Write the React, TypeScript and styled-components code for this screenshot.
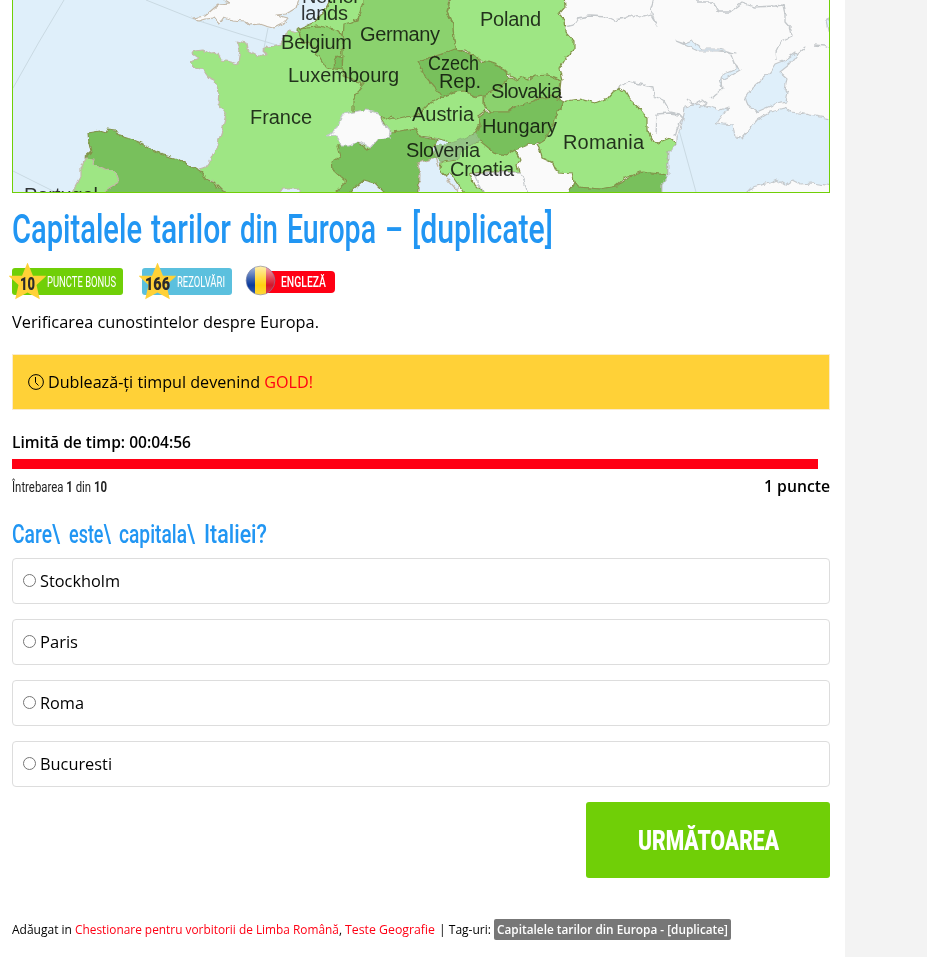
import React, { useLayoutEffect, useRef, useState } from "react";
import styled, { createGlobalStyle } from "styled-components";

const GlobalStyle = createGlobalStyle`
  * { box-sizing: border-box; }
  body { margin: 0; background: #f3f3f3; font-family: "Open Sans", "Noto Sans", sans-serif; color: #000; }
`;

const Page = styled.main`
  width: 845px;
  height: 957px;
  padding: 0 15px 0 12px;
  background: #fff;
  overflow: hidden;
`;

const MapFrame = styled.div`
  height: 193px;
  border: 1px solid #70cf07;
  border-top: 0;
  overflow: hidden;
  svg { display: block; }
  text { font-family: "Liberation Sans", Arial, sans-serif; font-size: 20px; fill: #000; opacity: 0.78; }
`;

const FitBox = styled.span<{ $w: number }>`
  display: inline-block;
  width: ${(p) => p.$w}px;
  white-space: nowrap;
`;
const FitInner = styled.span`
  display: inline-block;
  transform-origin: 0 50%;
`;

/* Text stretched or condensed to an exact line width. */
function Fit({ w, children }: { w: number; children: React.ReactNode }) {
  const ref = useRef<HTMLSpanElement>(null);
  const [scale, setScale] = useState(1);
  useLayoutEffect(() => {
    if (ref.current) {
      const natural = ref.current.getBoundingClientRect().width / scale;
      setScale(w / natural);
    }
  }, [w]);
  return (
    <FitBox $w={w}>
      <FitInner ref={ref} style={{ transform: `scaleX(${scale})` }}>{children}</FitInner>
    </FitBox>
  );
}

const Title = styled.h1`
  display: flex;
  gap: 9px;
  margin: 0;
  height: 70px;
  font: 500 40px/74px Roboto, sans-serif;
  color: #2196f3;
`;

const Badges = styled.div`
  display: flex;
  align-items: center;
  height: 37px;
`;
const Badge = styled.div<{ $w: number; $color: string }>`
  position: relative;
  width: ${(p) => p.$w}px;
  height: 27px;
  margin-right: 19px;
  padding-left: 35px;
  border-radius: 3px;
  background: ${(p) => p.$color};
  color: #fff;
  font: 400 14px/28px Roboto, sans-serif;
`;
const Star = styled.div`
  position: absolute;
  left: -3px;
  top: -5px;
  width: 37px;
  height: 37px;
  text-align: center;
  color: #2b2b2b;
  font: 900 18px/41px Roboto, sans-serif;
  svg { position: absolute; left: 0; top: 0; }
  > span { position: relative; }
`;
const Language = styled.div`
  position: relative;
  width: 75px;
  height: 22px;
  margin-left: 9px;
  padding-left: 21px;
  border-radius: 4px;
  background: #ff0014;
  color: #fff;
  font: 500 14px/22px Roboto, sans-serif;
  svg { position: absolute; left: -15px; top: -6px; }
`;

const Description = styled.p`
  margin: 0;
  height: 54px;
  font-size: 16px;
  line-height: 44px;
`;
const Notice = styled.div`
  display: flex;
  align-items: center;
  height: 56px;
  padding: 0 15px;
  border: 1px solid #faebcc;
  background: #ffd137;
  font-size: 16px;
  svg { margin-right: 4px; }
`;
const Red = styled.a`color: #ff0014;`;
const Timer = styled.div`
  height: 49px;
  padding-top: 20px;
  font-size: 16px;
  line-height: 24px;
  font-weight: 600;
`;
const Progress = styled.div`
  width: 806px;
  height: 10px;
  background: #ff0014;
`;
const Status = styled.div`
  display: flex;
  justify-content: space-between;
  height: 46px;
  line-height: 34px;
  font-size: 16px;
  font-weight: 600;
`;
const Counter = styled.div`
  color: #222;
  font: 400 14px/36px Roboto, sans-serif;
  b { font-weight: 700; }
`;
const Question = styled.h2`
  display: flex;
  gap: 8.5px;
  margin: 0;
  height: 43px;
  font: 500 25px/40px Roboto, sans-serif;
  color: #2196f3;
`;
const Options = styled.div`
  display: flex;
  flex-direction: column;
  gap: 15px;
`;
const Option = styled.label`
  display: flex;
  align-items: center;
  height: 46px;
  padding: 0 10px;
  border: 1px solid #ddd;
  border-radius: 4px;
  font-size: 16px;
`;
const Radio = styled.input`
  appearance: none;
  width: 13px;
  height: 13px;
  margin: 0 4px 2px 0;
  border: 1px solid #767676;
  border-radius: 50%;
  background: #fff;
`;
const Actions = styled.div`
  display: flex;
  justify-content: flex-end;
  margin-top: 15px;
`;
const NextButton = styled.button`
  width: 244px;
  height: 76px;
  padding: 2px 0 0;
  border: 0;
  border-radius: 3px;
  background: #70cf07;
  color: #fff;
  font: 900 28px/74px Roboto, sans-serif;
`;
const Footer = styled.footer`
  display: flex;
  align-items: center;
  height: 21px;
  margin-top: 41px;
  font-size: 12px;
  line-height: 21px;
`;
const Meta = styled.span<{ $gap?: number }>`
  margin-right: ${(p) => p.$gap ?? 3}px;
`;
const Tag = styled.span`
  height: 21px;
  padding: 0 3px;
  border-radius: 2px;
  background: #777;
  color: #fff;
  font-weight: 600;
`;

const LIGHT = "#9ee684";
const MID = "#8bd26e";
const DARK = "#78c05c";
const LAND = "#fafafa";
const SEA = "#dfeffa";
const COAST = "#c3b8a8";
const BORDER = "#83924a";
const GREY = "#c4c8cb";

const regions: [string, string, string][] = [
  [LAND, GREY, "460,-5 840,-5 840,200 450,200 475,165"],
  [LAND, COAST, "193,18 205,16 213,9 219,4 230,3 225,0 228,-4 300,-4 296,8 286,14 276,15 288,18 284,23 274,28 266,26 260,24 250,25 245,21 232,20 224,17 219,24 214,18 205,19 198,21"],
  [LIGHT, COAST, "288,31 281,44 268,47 263,50 267,54 258,56 247,50 246,43 237,41 240,50 238,64 231,62 221,60 218,53 211,54 203,50 194,51 192,54 198,58 191,62 196,68 203,70 209,78 214,80 219,92 218,104 226,114 223,127 218,143 209,163 206,167 199,169 205,179 212,181 222,191 240,196 278,196 283,189 296,189 306,196 340,196 420,80 340,40"],
  [DARK, BORDER, "89,143 88,133 100,131 106,133 108,129 116,130 120,136 130,139 143,144 160,154 178,159 186,164 196,169 202,173 207,180 214,183 222,191 240,196 103,196 107,189 118,183 116,173 105,169 93,165 93,159 84,158 91,152"],
  [LIGHT, COAST, "85,158 94,159 93,165 105,169 116,173 119,182 107,189 103,196 70,196 81,177 81,168"],
  [LIGHT, BORDER, "298,29 315,22 325,10 332,-4 365,-4 362,10 356,20 346,25 344,38 337,30 318,26"],
  [MID, BORDER, "298,30 308,27 318,26 330,28 337,30 344,37 343,45 341,55 336,60 333,70 326,67 320,57 315,55 317,49 307,43 302,42"],
  [DARK, BORDER, "337,56 342,58 343,69 335,68 334,62"],
  [MID, BORDER, "365,-5 450,-5 447,12 453,25 454,40 457,50 445,53 422,60 425,75 438,90 445,95 430,105 417,116 405,117 398,121 392,117 388,120 380,116 366,110 353,112 353,100 358,90 364,83 345,78 342,70 343,55 343,40 344,24 352,22 357,20 360,12"],
  [LIGHT, BORDER, "452,-5 564,-5 565,7 559,14 565,20 566,32 574,41 574,50 566,58 560,68 563,80 547,75 534,77 520,80 508,74 500,66 490,62 482,61 474,55 466,51 457,50 454,40 453,25 447,12"],
  [DARK, BORDER, "418,61 435,57 445,53 455,49 466,53 475,55 482,64 486,60 495,63 506,73 509,80 500,88 485,95 475,96 463,91 455,92 442,97 435,88 425,76"],
  [MID, BORDER, "485,95 500,88 510,77 518,80 523,77 530,80 535,76 548,75 555,78 561,80 559,98 540,98 530,103 513,107 508,112 490,112 484,105"],
  [DARK, BORDER, "486,112 508,112 515,107 540,99 552,96 566,103 558,112 553,125 547,140 540,142 528,145 515,150 507,155 495,153 482,145 475,135 480,125 478,118"],
  [DARK, BORDER, "337,146 350,145 356,140 368,150 378,139 391,131 417,129 420,137 437,140 433,150 436,158 418,163 420,175 417,196 388,196 375,183 364,180 345,196 337,190 346,182 333,170 332,162 340,157"],
  [SEA, COAST, "418,163 436,158 440,168 448,180 462,196 419,196 420,175"],
  [LIGHT, BORDER, "442,97 455,92 465,91 475,97 484,95 484,105 486,110 478,116 480,124 475,133 462,140 452,143 435,138 420,136 415,128 400,131 391,132 386,125 381,117 390,120 404,117 417,116 430,103"],
  [LAND, GREY, "328,136 334,130 340,124 343,114 353,112 366,110 378,113 383,122 391,131 390,138 377,140 370,148 358,141 350,146 341,146 337,135"],
  [LIGHT, BORDER, "462,150 480,141 495,153 507,155 515,150 520,160 517,165 519,172 480,172 470,175 474,184 486,196 466,196 455,180 450,172 445,176 440,170 441,162 457,160"],
  [LAND, GREY, "474,174 519,172 524,180 528,196 484,196"],
  ["#95c486", "#8fbe7f", "437,146 455,142 475,134 479,141 462,150 458,159 440,161 435,155"],
  [LIGHT, BORDER, "566,101 580,99 595,103 608,98 613,92 619,88 625,91 630,100 640,109 647,118 647,130 652,140 657,143 670,138 677,143 673,148 668,152 668,175 645,173 640,172 625,178 615,187 600,189 578,187 574,182 572,173 557,172 553,163 542,158 540,150 537,145 545,140 553,125 557,112"],
  [DARK, BORDER, "568,196 574,182 578,187 600,189 617,186 630,177 643,172 668,175 667,182 662,184 662,196"],
  [SEA, GREY, "668,175 668,152 677,144 677,137 683,120 685,107 698,104 710,107 720,110 728,107 717,123 723,124 733,125 735,137 742,138 757,120 765,115 770,112 785,108 790,112 800,113 840,121 840,187 812,183 800,184 792,180 785,185 777,180 770,183 752,187 743,196 662,196 662,184"],
  [SEA, GREY, "745,98 752,88 770,72 775,64 785,60 795,53 797,55 790,64 780,72 787,78 785,90 788,92 786,102 775,104 768,107 757,112 747,104"],
  [SEA, GREY, "676,41 685,44 692,41 702,49 720,49 735,53 719,51 698,51"],
  [SEA, GREY, "731,55 735,65 740,70 730,76 722,80 723,89 720,83 722,75 736,69"],
  [SEA, GREY, "826,21 832,18 832,30 828,31"],
];

const lines = [
  "565,27 573,25 578,18 590,16 608,17 614,20 626,18 634,14 640,17 650,14 657,26 652,14 651,8 654,-2",
  "697,2 712,2 719,12 730,12 742,3 754,7 775,6 783,5 785,14 785,22 791,29 792,37 781,42 776,52 777,60",
  "617,88 628,82 640,84 653,87 654,96 663,100 670,112 679,114 683,118",
  "656,134 657,114 668,113 679,114 683,118 677,129 675,136",
  "814,45 825,46 832,49",
  "797,55 806,47",
  "711,98 723,88",
  "687,99 693,105 702,100 707,104 698,108",
];

const labels: [string, number, number, number][] = [
  ["Nether", 302, 3, 58], ["lands", 301, 20, 47], ["Belgium", 281, 49, 71], ["Germany", 360, 41, 80],
  ["Poland", 480, 26, 61], ["Luxembourg", 288, 82, 111], ["France", 250, 124, 62], ["Czech", 428, 70, 51],
  ["Rep.", 439, 88, 42], ["Slovakia", 491, 98, 71], ["Austria", 412, 121, 62], ["Hungary", 482, 133, 75],
  ["Romania", 563, 149, 81], ["Slovenia", 406, 157, 74], ["Croatia", 450, 176, 64], ["Portugal", 24, 202, 74],
];

function EuropeMap() {
  return (
    <svg width="816" height="192" viewBox="13 0 816 192">
      <defs>
        <filter id="coast" filterUnits="userSpaceOnUse" x="0" y="-10" width="850" height="220">
          <feTurbulence type="fractalNoise" baseFrequency="0.16" numOctaves="2" seed="4" />
          <feDisplacementMap in="SourceGraphic" scale="5" xChannelSelector="R" yChannelSelector="G" />
        </filter>
      </defs>
      <rect x="13" width="816" height="192" fill={SEA} />
      <path d="M64 0L39 42L13 88M13 171L55 192M146 0L196 20L240 34L280 46M268 28L264 48" fill="none" stroke="#c9d9e2" />
      <g filter="url(#coast)" strokeLinejoin="round">
        {regions.map(([fill, stroke, points], i) => (
          <polygon key={i} points={points} fill={fill} stroke={stroke} strokeWidth="1.2" />
        ))}
        {lines.map((points, i) => (
          <polyline key={i} points={points} fill="none" stroke={GREY} strokeWidth="1.3" />
        ))}
      </g>
      <path d="M679 130L696 192" stroke="#c9d9e2" />
      {labels.map(([name, x, y, w]) => (
        <text key={name} x={x} y={y} textLength={w} lengthAdjust={name === "Czech" ? "spacingAndGlyphs" : "spacing"}>{name}</text>
      ))}
    </svg>
  );
}

const StarBadge = ({ value, w }: { value: string; w: number }) => (
  <Star>
    <svg width="37" height="37" viewBox="0 0 37 37">
      <path d="M18.5 -.5L24 12.7H37.5L27.5 22L30.8 36.3L18.5 29.5L6.2 36.3L9.5 22L-.5 12.7H13Z" fill="#ffd137" />
    </svg>
    <Fit w={w}>{value}</Fit>
  </Star>
);

const Flag = () => (
  <svg width="31" height="31" viewBox="0 0 31 31">
    <defs>
      <clipPath id="disc"><circle cx="15.5" cy="15.5" r="14.3" /></clipPath>
      <linearGradient id="gloss" x2="0" y2="1">
        <stop stopColor="#fff" stopOpacity=".7" />
        <stop offset=".45" stopColor="#fff" stopOpacity=".2" />
        <stop offset=".65" stopColor="#fff" stopOpacity="0" />
        <stop offset="1" stopColor="#fff" stopOpacity=".2" />
      </linearGradient>
    </defs>
    <g clipPath="url(#disc)">
      <path fill="#0a3a9c" d="M0 0H10V31H0z" />
      <path fill="#ffcf10" d="M10 0H21V31H10z" />
      <path fill="#d5152b" d="M21 0H31V31H21z" />
      <path fill="url(#gloss)" d="M0 0H31V31H0z" />
    </g>
    <circle cx="15.5" cy="15.5" r="14.4" fill="none" stroke="#7d86a8" strokeOpacity=".6" />
  </svg>
);

const Clock = () => (
  <svg width="16" height="16" viewBox="0 0 16 16" fill="none" stroke="#000">
    <circle cx="8" cy="8" r="7.4" />
    <path d="M7.5 3V8.5L10.5 11.5" />
  </svg>
);

const titleWords: [string, number][] = [
  ["Capitalele", 130], ["tarilor", 80], ["din", 38], ["Europa", 89], ["–", 18], ["[duplicate]", 141],
];
const questionWords: [string, number][] = [["Care\\", 48], ["este\\", 42], ["capitala\\", 76], ["Italiei?", 63]];
const answers: [string, number][] = [["Stockholm", 80], ["Paris", 38], ["Roma", 44], ["Bucuresti", 72]];

export default function App() {
  return (
    <Page>
      <GlobalStyle />
      <MapFrame><EuropeMap /></MapFrame>
      <Title>{titleWords.map(([word, w]) => <Fit key={word} w={w}>{word}</Fit>)}</Title>
      <Badges>
        <Badge $w={111} $color="#70cf07"><StarBadge value="10" w={15} /><Fit w={69}>PUNCTE BONUS</Fit></Badge>
        <Badge $w={90} $color="#5bc0de"><StarBadge value="166" w={25} /><Fit w={48}>REZOLVĂRI</Fit></Badge>
        <Language><Flag /><Fit w={45}>ENGLEZĂ</Fit></Language>
      </Badges>
      <Description><Fit w={307}>Verificarea cunostintelor despre Europa.</Fit></Description>
      <Notice><Clock /><Fit w={265}>Dublează-ți timpul devenind <Red>GOLD!</Red></Fit></Notice>
      <Timer><Fit w={179}>Limită de timp: 00:04:56</Fit></Timer>
      <Progress />
      <Status>
        <Counter><Fit w={95}>Întrebarea <b>1</b> din <b>10</b></Fit></Counter>
        <Fit w={66}>1 puncte</Fit>
      </Status>
      <Question>{questionWords.map(([word, w]) => <Fit key={word} w={w}>{word}</Fit>)}</Question>
      <Options>
        {answers.map(([name, w]) => (
          <Option key={name}><Radio type="radio" name="answer" /><Fit w={w}>{name}</Fit></Option>
        ))}
      </Options>
      <Actions><NextButton><Fit w={141}>URMĂTOAREA</Fit></NextButton></Actions>
      <Footer>
        <Meta><Fit w={60}>Adăugat in</Fit></Meta>
        <Meta><Fit w={267}><Red>Chestionare pentru vorbitorii de Limba Română</Red>,</Fit></Meta>
        <Meta $gap={4}><Fit w={90}><Red>Teste Geografie</Red></Fit></Meta>
        <Meta><Fit w={52}>| Tag-uri:</Fit></Meta>
        <Tag><Fit w={231}>Capitalele tarilor din Europa - [duplicate]</Fit></Tag>
      </Footer>
    </Page>
  );
}
